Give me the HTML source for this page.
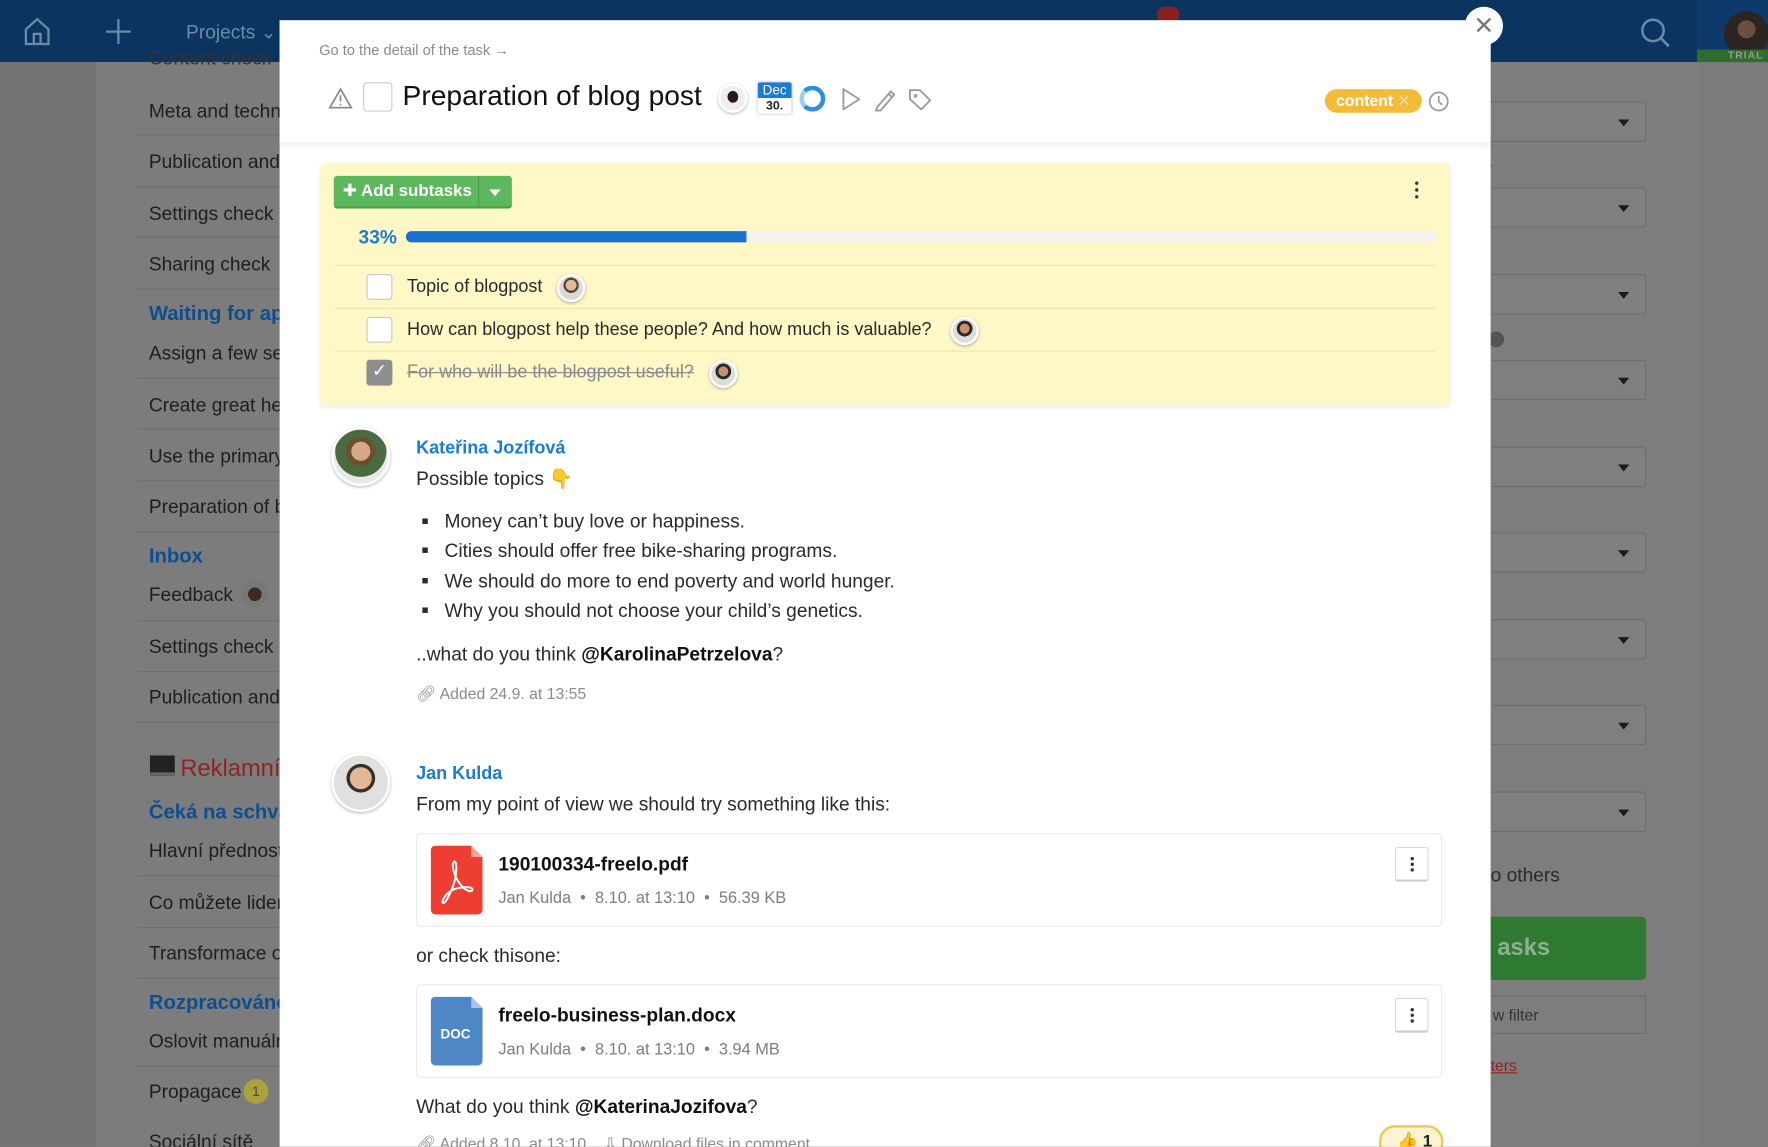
<!DOCTYPE html>
<html><head><meta charset="utf-8"><style>
*{box-sizing:border-box;margin:0;padding:0}
html,body{width:1768px;height:1147px;overflow:hidden;background:#7a7a7a}
#w{position:absolute;left:0;top:0;width:1568px;height:1017px;transform:scale(1.12755);transform-origin:0 0;font-family:"Liberation Sans","DejaVu Sans",sans-serif;overflow:hidden;background:#7b7b7b}
.abs{position:absolute}
.hdr{left:0;top:0;width:1568px;height:55px;background:#0b3560}
.lstrip{left:0;top:55px;width:85px;height:962px;background:#737373}
.side{left:85px;top:55px;width:163px;height:962px;background:#7c7c7c}
.si{position:absolute;left:132px;font-size:17px;color:#1e1e1e;white-space:nowrap}
.sh{position:absolute;left:132px;font-size:18px;font-weight:bold;color:#0d4f8e;white-space:nowrap}
.sl{position:absolute;left:122px;width:130px;height:1px;background:#6e6e6e}
.rp{left:1322px;top:55px;width:183px;height:962px;background:#7d7d7d}
.sel{position:absolute;left:1322px;width:138px;height:36px;border:1px solid #6c6c6c;border-left:none;border-radius:0 3px 3px 0;background:#7f7f7f}
.sel:after{content:"";position:absolute;right:14px;top:15px;border:5px solid transparent;border-top:6px solid #1a1a1a}
.modal{left:248px;top:18px;width:1074px;height:1010px;background:#fff}
.mtop{left:248px;top:18px;width:1074px;height:108px;background:#fff;box-shadow:0 3px 6px rgba(0,0,0,.07)}
.yel{left:284px;top:145px;width:1002px;height:215px;background:#fef7c6;border-radius:4px;box-shadow:0 1px 4px rgba(0,0,0,.08)}
.cb{position:absolute;width:23px;height:23px;border:1.5px solid #c8c8c8;border-radius:3px;background:#fff}
.st{position:absolute;left:361px;font-size:16px;color:#2a2a2a;white-space:nowrap}
.yl{position:absolute;left:297px;width:976px;height:1px;background:#efe6b5}
.av{position:absolute;border-radius:50%;background:radial-gradient(circle at 50% 38%,#e4b999 0 28%,#5a4535 29% 40%,#d8d8d8 41%);border:2px solid #fff;box-shadow:0 1px 3px rgba(0,0,0,.3)}
.txt{position:absolute;font-size:17px;color:#2a2a2a;white-space:nowrap}
.name{position:absolute;font-size:16px;font-weight:bold;color:#1c7bd4}
.meta{position:absolute;font-size:14px;color:#8a8a8a;white-space:nowrap}
.card{position:absolute;left:369px;width:910px;height:83px;border:1px solid #ebebeb;border-radius:4px;background:#fff}
.fn{position:absolute;left:72px;top:17px;font-size:17px;font-weight:bold;color:#111}
.fm{position:absolute;left:72px;top:49px;font-size:14.5px;color:#7d7d7d;white-space:nowrap}
.kb{position:absolute;right:11px;top:11px;width:30px;height:31px;border:1px solid #d6d6d6;border-bottom:2px solid #ccc;border-radius:3px;background:#fff}
.kb i,.dots i{position:absolute;left:13px;width:3px;height:3px;border-radius:50%;background:#333}
</style></head><body><div id="w">
<div class="abs hdr"></div>
<svg class="abs" style="left:20px;top:14px" width="26" height="28" viewBox="0 0 26 28"><path d="M3 12 L13 3 L23 12 V25 H3 Z M10 25 V16 H16 V25" fill="none" stroke="#6f8aa6" stroke-width="2"/></svg>
<svg class="abs" style="left:93px;top:16px" width="24" height="24"><path d="M12 1V23M1 12H23" stroke="#6f8aa6" stroke-width="2"/></svg>
<div class="abs" style="left:165px;top:19px;font-size:17px;color:#6f8aa6">Projects ⌄</div>
<div class="abs" style="left:1026px;top:6px;width:20px;height:14px;border-radius:7px;background:#8a2020"></div>
<svg class="abs" style="left:1454px;top:15px" width="28" height="28"><circle cx="12" cy="12" r="9.5" fill="none" stroke="#6f8aa6" stroke-width="2.2"/><path d="M19 19L26 26" stroke="#6f8aa6" stroke-width="2.4"/></svg>
<div class="abs" style="left:1505px;top:0;width:63px;height:55px;background:#0d3a6a"></div>
<div class="abs" style="left:1529px;top:10px;width:40px;height:40px;border-radius:50%;background:radial-gradient(circle at 50% 40%,#6a5040 0 25%,#2b2420 26%)"></div>
<div class="abs" style="left:1505px;top:44px;width:63px;height:11px;background:#2f6d2f;color:#9a9a9a;font-size:9px;font-weight:bold;text-align:right;padding-right:4px;line-height:11px;letter-spacing:1px">TRIAL</div>
<div class="abs lstrip"></div><div class="abs side"></div>
<div class="si" style="top:42px;color:#333">Content check</div>
<div class="si" style="top:89px">Meta and technical</div><div class="sl" style="top:119px"></div>
<div class="si" style="top:134px">Publication and</div><div class="sl" style="top:165px"></div>
<div class="si" style="top:180px">Settings check</div><div class="sl" style="top:210px"></div>
<div class="si" style="top:225px">Sharing check</div><div class="sl" style="top:256px"></div>
<div class="sh" style="top:268px">Waiting for approval</div>
<div class="si" style="top:304px">Assign a few se</div><div class="sl" style="top:335px"></div>
<div class="si" style="top:350px">Create great he</div><div class="sl" style="top:380px"></div>
<div class="si" style="top:395px">Use the primary</div><div class="sl" style="top:426px"></div>
<div class="si" style="top:440px">Preparation of b</div><div class="sl" style="top:471px"></div>
<div class="sh" style="top:483px">Inbox</div>
<div class="si" style="top:518px">Feedback</div>
<div class="abs" style="left:214px;top:515px;width:24px;height:24px;border-radius:50%;background:radial-gradient(circle,#3a2a20 0 35%,#777 36%)"></div>
<div class="sl" style="top:550px"></div>
<div class="si" style="top:564px">Settings check</div><div class="sl" style="top:595px"></div>
<div class="si" style="top:609px">Publication and</div><div class="sl" style="top:640px"></div>
<div class="abs" style="left:133px;top:670px;width:22px;height:18px;background:#222;border-bottom:3px solid #666"></div>
<div class="abs" style="left:160px;top:670px;font-size:21px;color:#8e2424">Reklamní</div>
<div class="sh" style="top:710px">Čeká na schválení</div>
<div class="si" style="top:745px">Hlavní přednost</div><div class="sl" style="top:776px"></div>
<div class="si" style="top:791px">Co můžete lider</div><div class="sl" style="top:822px"></div>
<div class="si" style="top:836px">Transformace o</div><div class="sl" style="top:867px"></div>
<div class="sh" style="top:879px">Rozpracováno</div>
<div class="si" style="top:914px">Oslovit manuáln</div><div class="sl" style="top:945px"></div>
<div class="si" style="top:959px">Propagace</div>
<div class="abs" style="left:216px;top:957px;width:22px;height:22px;border-radius:50%;background:#a9a33c;font-size:12px;text-align:center;line-height:22px;color:#444">1</div>
<div class="si" style="top:1003px">Sociální sítě</div>
<div class="abs rp"></div>
<div class="sel" style="top:90px"></div><div class="sel" style="top:166px"></div><div class="sel" style="top:243px"></div><div class="sel" style="top:319px"></div><div class="sel" style="top:396px"></div><div class="sel" style="top:472px"></div><div class="sel" style="top:549px"></div><div class="sel" style="top:625px"></div><div class="sel" style="top:702px"></div>
<div class="abs" style="left:1319px;top:141px;font-size:14px;color:#5a5a5a">r</div>
<div class="abs" style="left:1320px;top:294px;width:14px;height:14px;border-radius:50%;background:#555"></div>
<div class="abs" style="left:1322px;top:767px;font-size:17px;color:#2a2a2a">o others</div>
<div class="abs" style="left:1322px;top:813px;width:138px;height:56px;background:#2f7a33;border-radius:0 4px 4px 0;color:#8fb090;font-size:21px;font-weight:bold;line-height:56px;padding-left:6px">asks</div>
<div class="abs" style="left:1322px;top:883px;width:138px;height:34px;border:1px solid #6c6c6c;border-left:none;font-size:14px;color:#333;line-height:32px;padding-left:2px">w filter</div>
<div class="abs" style="left:1322px;top:937px;font-size:14px;color:#8e2424;text-decoration:underline">ters</div>

<div class="abs modal"></div>
<div class="abs mtop"></div>
<div class="abs" style="left:1299px;top:6px;width:34px;height:34px;border-radius:50%;background:#fff;text-align:center;line-height:34px;font-size:22px;font-weight:bold;color:#777">✕</div>
<div class="abs" style="left:283px;top:37px;font-size:13px;color:#8a8a8a">Go to the detail of the task →</div>
<svg class="abs" style="left:291px;top:77px" width="22" height="20"><path d="M11 2L20.5 18.5H1.5Z M11 7.5V13 M11 15V16.5" fill="none" stroke="#888" stroke-width="1.5"/></svg>
<div class="cb" style="left:322px;top:73px;width:26px;height:26px;border-color:#ccc"></div>
<div class="abs" style="left:357px;top:71px;font-size:25px;color:#111">Preparation of blog post</div>
<div class="av" style="left:637px;top:74px;width:26px;height:26px;background:radial-gradient(ellipse at 50% 45%,#2a1c14 0 30%,#eee 31%)"></div>
<div class="abs" style="left:672px;top:73px;width:30px;height:28px;border-radius:2px;overflow:hidden;box-shadow:0 0 2px #aaa"><div style="background:#1c7bd4;color:#fff;font-size:12px;text-align:center;height:14px;line-height:14px">Dec</div><div style="background:#fff;color:#222;font-size:11px;font-weight:bold;text-align:center;line-height:14px">30.</div></div>
<div class="abs" style="left:709px;top:76px;width:23px;height:23px;border-radius:50%;border:4px solid #2b8fe6;border-left-color:#9fcdf3"></div>
<svg class="abs" style="left:745px;top:77px" width="20" height="22"><path d="M3 2L17 11L3 20Z" fill="none" stroke="#999" stroke-width="1.6" stroke-linejoin="round"/></svg>
<svg class="abs" style="left:774px;top:77px" width="22" height="22"><path d="M4 18L16 4L19 7L7 21L3 21Z M14 6L17 9" fill="none" stroke="#999" stroke-width="1.6"/></svg>
<svg class="abs" style="left:805px;top:77px" width="24" height="22"><path d="M2 3V11L12 20L20 12L11 3Z" fill="none" stroke="#999" stroke-width="1.6" stroke-linejoin="round"/><circle cx="7" cy="8" r="1.6" fill="#999"/></svg>
<div class="abs" style="left:1175px;top:79px;width:86px;height:21px;border-radius:11px;background:#f3bb37;color:#fff;font-size:14px;font-weight:bold;line-height:21px;padding-left:10px">content <span style="font-weight:normal;color:#fbe1a4">✕</span></div>
<svg class="abs" style="left:1266px;top:80px" width="20" height="20"><circle cx="10" cy="10" r="8" fill="none" stroke="#999" stroke-width="1.5"/><path d="M10 5V10L13 13" fill="none" stroke="#999" stroke-width="1.5"/></svg>

<div class="abs yel"></div>
<div class="abs" style="left:296px;top:156px;width:158px;height:29px;background:#5cb85c;border-radius:3px;border-bottom:2px solid #4aa04a"></div>
<div class="abs" style="left:424px;top:156px;width:1px;height:28px;background:#4a9a4a"></div>
<div class="abs" style="left:304px;top:160px;font-size:15px;font-weight:bold;color:#fff">✚ Add subtasks</div>
<div class="abs" style="left:434px;top:168px;border:5px solid transparent;border-top:6px solid #fff"></div>
<div class="abs dots" style="left:1242px;top:160px;width:30px;height:20px"><i style="top:1px"></i><i style="top:7px"></i><i style="top:13px"></i></div>
<div class="abs" style="left:318px;top:201px;font-size:17px;font-weight:bold;color:#1c7bd4">33%</div>
<div class="abs" style="left:360px;top:205px;width:914px;height:10px;border-radius:5px;background:#f2f2ee"></div>
<div class="abs" style="left:360px;top:205px;width:302px;height:10px;border-radius:5px 0 0 5px;background:#1872cd"></div>
<div class="yl" style="top:235px"></div><div class="yl" style="top:273px"></div><div class="yl" style="top:311px"></div>
<div class="cb" style="left:325px;top:243px"></div>
<div class="st" style="top:246px">Topic of blogpost</div>
<div class="av" style="left:494px;top:243px;width:25px;height:25px"></div>
<div class="cb" style="left:325px;top:281px"></div>
<div class="st" style="top:284px">How can blogpost help these people? And how much is valuable?</div>
<div class="av" style="left:843px;top:281px;width:25px;height:25px;background:radial-gradient(circle at 50% 40%,#c99070 0 26%,#2a2a2a 27% 42%,#dcdcdc 43%)"></div>
<div class="cb" style="left:325px;top:319px;background:#8e8e8e;border-color:#8e8e8e;color:#fff;font-size:16px;text-align:center;line-height:20px">✓</div>
<div class="st" style="top:322px;color:#8a8a8a;text-decoration:line-through">For who will be the blogpost useful?</div>
<div class="av" style="left:629px;top:319px;width:25px;height:25px;background:radial-gradient(circle at 50% 40%,#c99070 0 26%,#2a2a2a 27% 42%,#dcdcdc 43%)"></div>

<div class="av" style="left:294px;top:379px;width:52px;height:52px;background:radial-gradient(circle at 50% 40%,#d6a888 0 22%,#6a5030 23% 34%,#4a6a40 35% 60%,#e8e8e8 61%)"></div>
<div class="name" style="left:369px;top:389px">Kateřina Jozífová</div>
<div class="txt" style="left:369px;top:415px">Possible topics <span style="color:#f2b01e">👇</span></div>
<div class="txt" style="left:374px;top:453px"><span style="font-size:10px;vertical-align:3px">■</span>&nbsp;&nbsp; Money can’t buy love or happiness.</div>
<div class="txt" style="left:374px;top:479px"><span style="font-size:10px;vertical-align:3px">■</span>&nbsp;&nbsp; Cities should offer free bike-sharing programs.</div>
<div class="txt" style="left:374px;top:506px"><span style="font-size:10px;vertical-align:3px">■</span>&nbsp;&nbsp; We should do more to end poverty and world hunger.</div>
<div class="txt" style="left:374px;top:532px"><span style="font-size:10px;vertical-align:3px">■</span>&nbsp;&nbsp; Why you should not choose your child’s genetics.</div>
<div class="txt" style="left:369px;top:571px">..what do you think <b style="color:#111">@KarolinaPetrzelova</b>?</div>
<div class="meta" style="left:369px;top:607px">🔗︎ Added 24.9. at 13:55</div>

<div class="av" style="left:294px;top:668px;width:52px;height:52px;background:radial-gradient(circle at 50% 42%,#e0b898 0 26%,#3a2e28 27% 34%,#e0e0e0 35%)"></div>
<div class="name" style="left:369px;top:678px">Jan Kulda</div>
<div class="txt" style="left:369px;top:704px">From my point of view we should try something like this:</div>
<div class="card" style="top:739px">
<svg style="position:absolute;left:12px;top:10px" width="46" height="61"><path d="M5 0H36L46 10V56Q46 61 41 61H5Q0 61 0 56V5Q0 0 5 0Z" fill="#ee3e32"/><path d="M36 0V10H46Z" fill="#f5a49e"/><path d="M21 14C18 16 20 26 26 34C30 40 37 42 37 39C37 36 28 36 20 39C13 42 9 50 11 51C13 52 20 38 22 28C23 21 23 14 21 14Z" fill="none" stroke="#fff" stroke-width="1.8"/></svg>
<div class="fn">190100334-freelo.pdf</div><div class="fm">Jan Kulda &nbsp;•&nbsp; 8.10. at 13:10 &nbsp;•&nbsp; 56.39 KB</div>
<div class="kb"><i style="top:8px"></i><i style="top:13px"></i><i style="top:18px"></i></div></div>
<div class="txt" style="left:369px;top:838px">or check thisone:</div>
<div class="card" style="top:873px">
<svg style="position:absolute;left:12px;top:10px" width="46" height="61"><path d="M5 0H36L46 10V56Q46 61 41 61H5Q0 61 0 56V5Q0 0 5 0Z" fill="#4f86c6"/><path d="M36 0V10H46Z" fill="#a9c4e6"/><text x="22" y="37" font-family="Liberation Sans,sans-serif" font-size="12" font-weight="bold" fill="#fff" text-anchor="middle">DOC</text></svg>
<div class="fn">freelo-business-plan.docx</div><div class="fm">Jan Kulda &nbsp;•&nbsp; 8.10. at 13:10 &nbsp;•&nbsp; 3.94 MB</div>
<div class="kb"><i style="top:8px"></i><i style="top:13px"></i><i style="top:18px"></i></div></div>
<div class="txt" style="left:369px;top:972px">What do you think <b style="color:#111">@KaterinaJozifova</b>?</div>
<div class="meta" style="left:369px;top:1006px">🔗︎ Added 8.10. at 13:10 &nbsp;&nbsp; ⇩ Download files in comment</div>
<div class="abs" style="left:1223px;top:998px;width:57px;height:30px;border-radius:14px;border:2px solid #f2c44a;background:#fdf3d0;font-size:15px;font-weight:bold;padding:3px 0 0 14px;color:#222">👍 1</div>
</div></body></html>
